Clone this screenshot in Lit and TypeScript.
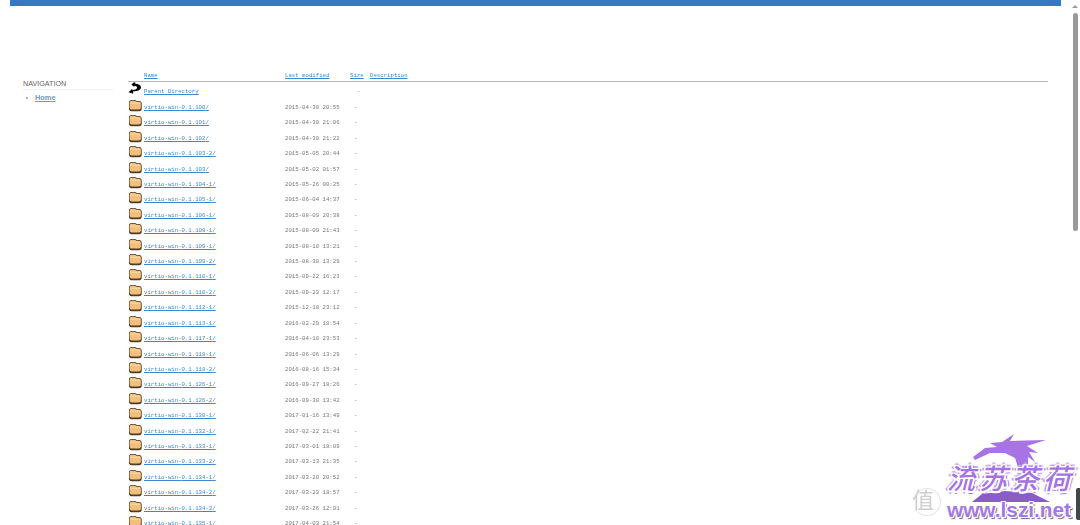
import { LitElement, html, css } from "lit";
import { customElement } from "lit/decorators.js";

const rows: [string, string][] = [
  ["0.1.100", "2015-04-30 20:55"],
  ["0.1.101", "2015-04-30 21:06"],
  ["0.1.102", "2015-04-30 21:22"],
  ["0.1.103-2", "2015-05-05 20:44"],
  ["0.1.103", "2015-05-02 01:57"],
  ["0.1.104-1", "2015-05-26 00:25"],
  ["0.1.105-1", "2015-06-04 14:37"],
  ["0.1.106-1", "2015-08-09 20:38"],
  ["0.1.108-1", "2015-08-09 21:43"],
  ["0.1.109-1", "2015-08-10 13:21"],
  ["0.1.109-2", "2015-08-30 13:29"],
  ["0.1.110-1", "2015-09-22 16:23"],
  ["0.1.110-2", "2015-09-23 12:17"],
  ["0.1.112-1", "2015-12-18 23:12"],
  ["0.1.113-1", "2016-02-29 18:54"],
  ["0.1.117-1", "2016-04-10 23:53"],
  ["0.1.118-1", "2016-06-06 13:29"],
  ["0.1.118-2", "2016-08-16 15:34"],
  ["0.1.126-1", "2016-09-27 18:26"],
  ["0.1.126-2", "2016-09-30 13:42"],
  ["0.1.130-1", "2017-01-16 13:49"],
  ["0.1.132-1", "2017-02-22 21:41"],
  ["0.1.133-1", "2017-03-01 18:09"],
  ["0.1.133-2", "2017-03-13 21:35"],
  ["0.1.134-1", "2017-03-20 20:52"],
  ["0.1.134-2", "2017-03-23 18:57"],
  ["0.1.134-3", "2017-03-26 12:01"],
  ["0.1.135-1", "2017-04-03 21:54"],
];

const folder = html`<svg class="ico" viewBox="0 0 14 13" width="14" height="13">
  <path d="M1 3.5 Q1 1 3.5 1 H6.5 Q8 1 8.8 2 H11 Q13.7 2 13.7 5 V9.5 Q13.7 12.2 11 12.2 H3.5 Q1 12.2 1 9.5 Z" fill="#4f3a24"/>
  <path d="M1.6 3.5 Q1.6 1.7 3.5 1.7 H6.3 Q7.6 1.7 8.4 2.8 H10.8 Q12.9 2.8 12.9 5 V8.6 Q12.9 10.6 10.8 10.6 H3.6 Q1.6 10.6 1.6 8.6 Z" fill="#f2bf7c"/>
  <path d="M2 4.2 H12.4" stroke="#fbdfb6" stroke-width=".9" fill="none"/>
</svg>`;

const back = html`<svg class="ico" viewBox="0 0 14 13" width="14" height="13">
  <path d="M6 .2 L7.5 .8 L7.2 1.8 Q12.5 2.2 13 5 Q13.2 8 8.5 9 L5 9.5 L5.3 11.8 L.5 10.3 L4 7 L4.6 8 L7.5 7.4 Q9.8 6.4 9 5 Q8.4 4 6.4 3.8 L6.2 5 L3.4 2.6 Z" fill="#050505"/>
</svg>`;

@customElement("app-root")
export class AppRoot extends LitElement {
  static styles = css`
    :host {
      display: block;
      height: 525px;
      overflow: hidden;
      position: relative;
      background: #fff;
      font-family: "Liberation Mono", monospace;
    }
    .topbar {
      height: 6px;
      width: 1051px;
      margin-left: 10px;
      background: #3478c8;
    }
    .layout {
      display: flex;
      padding: 65px 32px 0 23px;
    }
    .side {
      width: 90px;
      margin-right: 15px;
      padding-top: 8px;
      flex: none;
      font-family: "Liberation Sans", sans-serif;
    }
    .side h3 {
      margin: 0;
      font-size: 7.2px;
      line-height: 9px;
      font-weight: 400;
      color: #666;
      padding-bottom: 1px;
      border-bottom: 1px solid #f0f0f0;
    }
    .side ul {
      list-style: none;
      margin: 3px 0 0;
      padding: 0 0 0 3px;
      display: flex;
      align-items: center;
      gap: 7px;
    }
    .dot {
      width: 2px;
      height: 2px;
      background: #8a9aa8;
      border-radius: 50%;
    }
    .side a {
      font-size: 7.4px;
      line-height: 9px;
      font-weight: 700;
      color: #6a9ccb;
      text-decoration: underline;
    }
    .list {
      flex: 1;
      font-size: 5.7px;
      color: #777;
      filter: blur(0.25px);
    }
    .row {
      display: grid;
      grid-template-columns: 16px 141px 65px 20px 1fr;
      align-items: center;
      height: 15.41px;
    }
    .head {
      border-bottom: 1px solid #b5b5b5;
      align-items: start;
      padding-top: 1px;
      box-sizing: border-box;
      height: 11px;
    }
    .first {
      box-sizing: border-box;
      height: 17.8px;
      padding-top: 2.2px;
    }
    .list a {
      color: #3f86cc;
      text-decoration: underline;
      white-space: nowrap;
    }
    .ico {
      display: block;
      margin-top: -4px;
    }
    .first .ico {
      margin-top: -6px;
    }
    .dash {
      padding-left: 4px;
    }
    .dash-parent {
      padding-left: 7px;
    }
    .scroll {
      position: absolute;
      right: 0;
      top: 0;
      width: 10px;
      height: 525px;
    }
    .arrow {
      position: absolute;
      left: 2px;
      top: 5px;
      width: 0;
      height: 0;
      border-left: 3px solid transparent;
      border-right: 3px solid transparent;
      border-bottom: 3px solid #999;
    }
    .thumb {
      position: absolute;
      left: 3px;
      top: 13px;
      width: 5px;
      height: 218px;
      border-radius: 3px;
      background: #999;
    }
    .sliver {
      position: absolute;
      right: 0;
      top: 488px;
      width: 4px;
      height: 32px;
      border-radius: 2px 0 0 2px;
      background: #3d4a48;
    }
    .wm {
      position: absolute;
      left: 910px;
      top: 430px;
      width: 170px;
      height: 95px;
    }
    .dragon {
      position: absolute;
      left: 0;
      top: 0;
      width: 170px;
      height: 95px;
    }
    .zhi {
      position: absolute;
      left: 3px;
      top: 58px;
      width: 28px;
      height: 28px;
      border: 1px solid #e4e4e4;
      border-left-color: transparent;
      border-radius: 50%;
      box-sizing: border-box;
      font: 22px/18px "Noto Sans CJK SC", sans-serif;
      color: #cfcfcf;
      text-indent: -2px;
    }
    .cn {
      position: absolute;
      left: 37px;
      top: 30px;
      font: italic 500 28px/34px "Noto Sans CJK SC", sans-serif;
      letter-spacing: 4px;
      white-space: nowrap;
      color: #a474e2;
      text-shadow:
        1.5px 0 0 #fff, -1.5px 0 0 #fff, 0 1.5px 0 #fff, 0 -1.5px 0 #fff,
        1.5px 1.5px 0 #fff, -1.5px -1.5px 0 #fff, 1.5px -1.5px 0 #fff, -1.5px 1.5px 0 #fff,
        3px 0 1px #a87ce0, -3px 0 1px #a87ce0, 0 3px 1px #8f5fd0, 0 -3px 1px #c8aaf0;
    }
    .url {
      position: absolute;
      left: 37px;
      top: 69px;
      font: 700 20.8px/22px "Liberation Sans", sans-serif;
      white-space: nowrap;
      color: #a478e4;
      text-shadow:
        1px 0 0 #fff, -1px 0 0 #fff, 0 1px 0 #fff, 0 -1px 0 #fff,
        1px 1px 0 #fff, -1px -1px 0 #fff, 1px -1px 0 #fff, -1px 1px 0 #fff,
        2px 2px 1px #75607f;
    }
  `;

  render() {
    return html`
      <div class="topbar"></div>
      <div class="layout">
        <nav class="side">
          <h3>NAVIGATION</h3>
          <ul><li class="dot"></li><a href="#">Home</a></ul>
        </nav>
        <div class="list">
          <div class="row head">
            <span></span>
            <a href="#">Name</a>
            <a href="#">Last modified</a>
            <a href="#">Size</a>
            <a href="#">Description</a>
          </div>
          <div class="row first">
            ${back}
            <a href="#">Parent Directory</a>
            <span></span>
            <span class="dash-parent">-</span>
            <span></span>
          </div>
          ${rows.map(
            ([v, d]) => html`<div class="row">
              ${folder}
              <a href="#">virtio-win-${v}/</a>
              <span>${d}</span>
              <span class="dash">-</span>
              <span></span>
            </div>`
          )}
        </div>
      </div>
      <div class="scroll">
        <div class="arrow"></div>
        <div class="thumb"></div>
      </div>
      <div class="sliver"></div>
      <div class="wm">
        <svg class="dragon" viewBox="0 0 170 95">
          <path d="M80 13 L92 12 L104 4 L100 11 L136 10 L117 16 L128 23 L119 22 L125 32 L118 27 L118 36 L108 37 L105 28 L95 23 L80 23 L65 30 L63 27 L75 18 L87 17 Z" fill="#a874e4"/>
          <path d="M62 72 L72 64 L95 61 L122 63 L140 72 Z" fill="#8a5cc8"/>
        </svg>
        <div class="zhi">值</div>
        <div class="cn">流苏茶荷</div>
        <div class="url">www.lszi.net</div>
      </div>
    `;
  }
}
